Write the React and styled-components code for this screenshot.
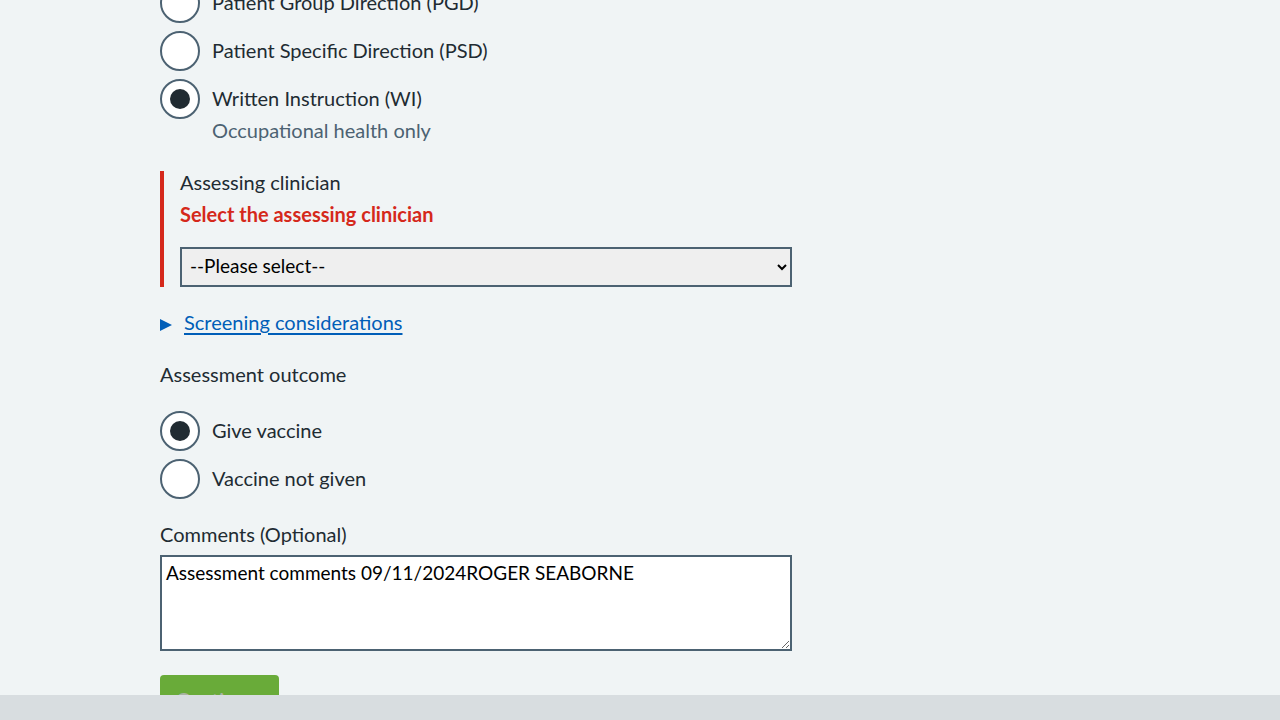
import styled, { createGlobalStyle } from "styled-components";

const GlobalStyle = createGlobalStyle`
  html, body {
    margin: 0;
    padding: 0;
    background: #f0f4f5;
    overflow: hidden;
  }
  body {
    font-family: "Lato", "Liberation Sans", sans-serif;
    color: #212b32;
  }
`;

const Page = styled.main`
  width: 632px;
  margin: -17px 0 0 160px;
  display: flex;
  flex-direction: column;
`;

const RadioList = styled.div`
  display: flex;
  flex-direction: column;
  gap: 8px;
  margin-bottom: ${(p) => p.$after || 0}px;
`;

const RadioItem = styled.label`
  display: grid;
  grid-template-columns: 40px 1fr;
  column-gap: 12px;
  align-items: start;
`;

const Circle = styled.span`
  width: 40px;
  height: 40px;
  box-sizing: border-box;
  border: 2px solid #4c6272;
  border-radius: 50%;
  background: #fff;
  display: flex;
  align-items: center;
  justify-content: center;

  &::after {
    content: "";
    width: 20px;
    height: 20px;
    border-radius: 50%;
    background: #212b32;
    display: ${(p) => (p.$checked ? "block" : "none")};
  }
`;

const RadioText = styled.span`
  display: flex;
  flex-direction: column;
  padding: 7px 0 1px;
  font-size: 20px;
  line-height: 24px;
`;

const Hint = styled.span`
  color: #4c6272;
  margin-top: 8px;
`;

const ErrorGroup = styled.div`
  border-left: 4px solid #d5281b;
  padding-left: 16px;
  display: flex;
  flex-direction: column;
  margin-bottom: 24px;
`;

const Label = styled.div`
  font-size: 20px;
  line-height: 22px;
  padding-bottom: 2px;
  margin-bottom: ${(p) => p.$after || 0}px;
`;

const ErrorMessage = styled.div`
  color: #d5281b;
  font-weight: 700;
  font-size: 20px;
  line-height: 22px;
  padding-bottom: 2px;
  margin: 8px 0 20px;
`;

const Select = styled.select`
  width: 612px;
  height: 40px;
  box-sizing: border-box;
  border: 2px solid #4c6272;
  border-radius: 0;
  background: #efefef;
  color: #000;
  font-family: "Lato", "Liberation Sans", sans-serif;
  font-size: 19px;
  padding: 0 4px 3px;
`;

const Details = styled.div`
  display: flex;
  align-items: center;
  gap: 12px;
  height: 24px;
  margin-bottom: 28px;
`;

const Triangle = styled.span`
  width: 0;
  height: 0;
  border-top: 6.5px solid transparent;
  border-bottom: 6.5px solid transparent;
  border-left: 12px solid #005eb8;
  margin-top: 3px;
`;

const Link = styled.a`
  color: #005eb8;
  font-size: 20px;
  line-height: 22px;
  padding-bottom: 2px;
  text-decoration: underline;
  text-underline-offset: 3px;
  cursor: pointer;
`;

const TextArea = styled.textarea`
  width: 632px;
  height: 96px;
  box-sizing: border-box;
  border: 2px solid #4c6272;
  border-radius: 0;
  background: #fff;
  color: #000;
  font-family: "Lato", "Liberation Sans", sans-serif;
  font-size: 19px;
  line-height: 24px;
  padding: 4px 4px;
  margin-bottom: 24px;
  resize: both;
`;

const Button = styled.button`
  align-self: flex-start;
  width: 119px;
  height: 52px;
  border: 0;
  border-radius: 4px;
  padding: 12px 16px 0;
  display: flex;
  justify-content: flex-start;
  align-items: flex-start;
  background: #69ab39;
  color: #a9b3a3;
  font-family: "Lato", "Liberation Sans", sans-serif;
  font-size: 20px;
  line-height: 24px;
  font-weight: 600;
`;

const Footer = styled.div`
  position: fixed;
  left: 0;
  right: 0;
  bottom: 0;
  height: 25px;
  background: #d8dde0;
`;

const Radio = ({ checked, children, hint }) => (
  <RadioItem>
    <Circle $checked={checked} />
    <RadioText>
      {children}
      {hint && <Hint>{hint}</Hint>}
    </RadioText>
  </RadioItem>
);

export default function App() {
  return (
    <>
      <GlobalStyle />
      <Page>
        <RadioList $after={28}>
          <Radio>Patient Group Direction (PGD)</Radio>
          <Radio>Patient Specific Direction (PSD)</Radio>
          <Radio checked hint="Occupational health only">
            Written Instruction (WI)
          </Radio>
        </RadioList>

        <ErrorGroup>
          <Label>Assessing clinician</Label>
          <ErrorMessage>Select the assessing clinician</ErrorMessage>
          <Select defaultValue="">
            <option value="">--Please select--</option>
          </Select>
        </ErrorGroup>

        <Details>
          <Triangle />
          <Link>Screening considerations</Link>
        </Details>

        <Label $after={24}>Assessment outcome</Label>
        <RadioList $after={24}>
          <Radio checked>Give vaccine</Radio>
          <Radio>Vaccine not given</Radio>
        </RadioList>

        <Label $after={8}>Comments (Optional)</Label>
        <TextArea defaultValue="Assessment comments 09/11/2024ROGER SEABORNE" />
        <Button type="button">Continue</Button>
      </Page>
      <Footer />
    </>
  );
}
